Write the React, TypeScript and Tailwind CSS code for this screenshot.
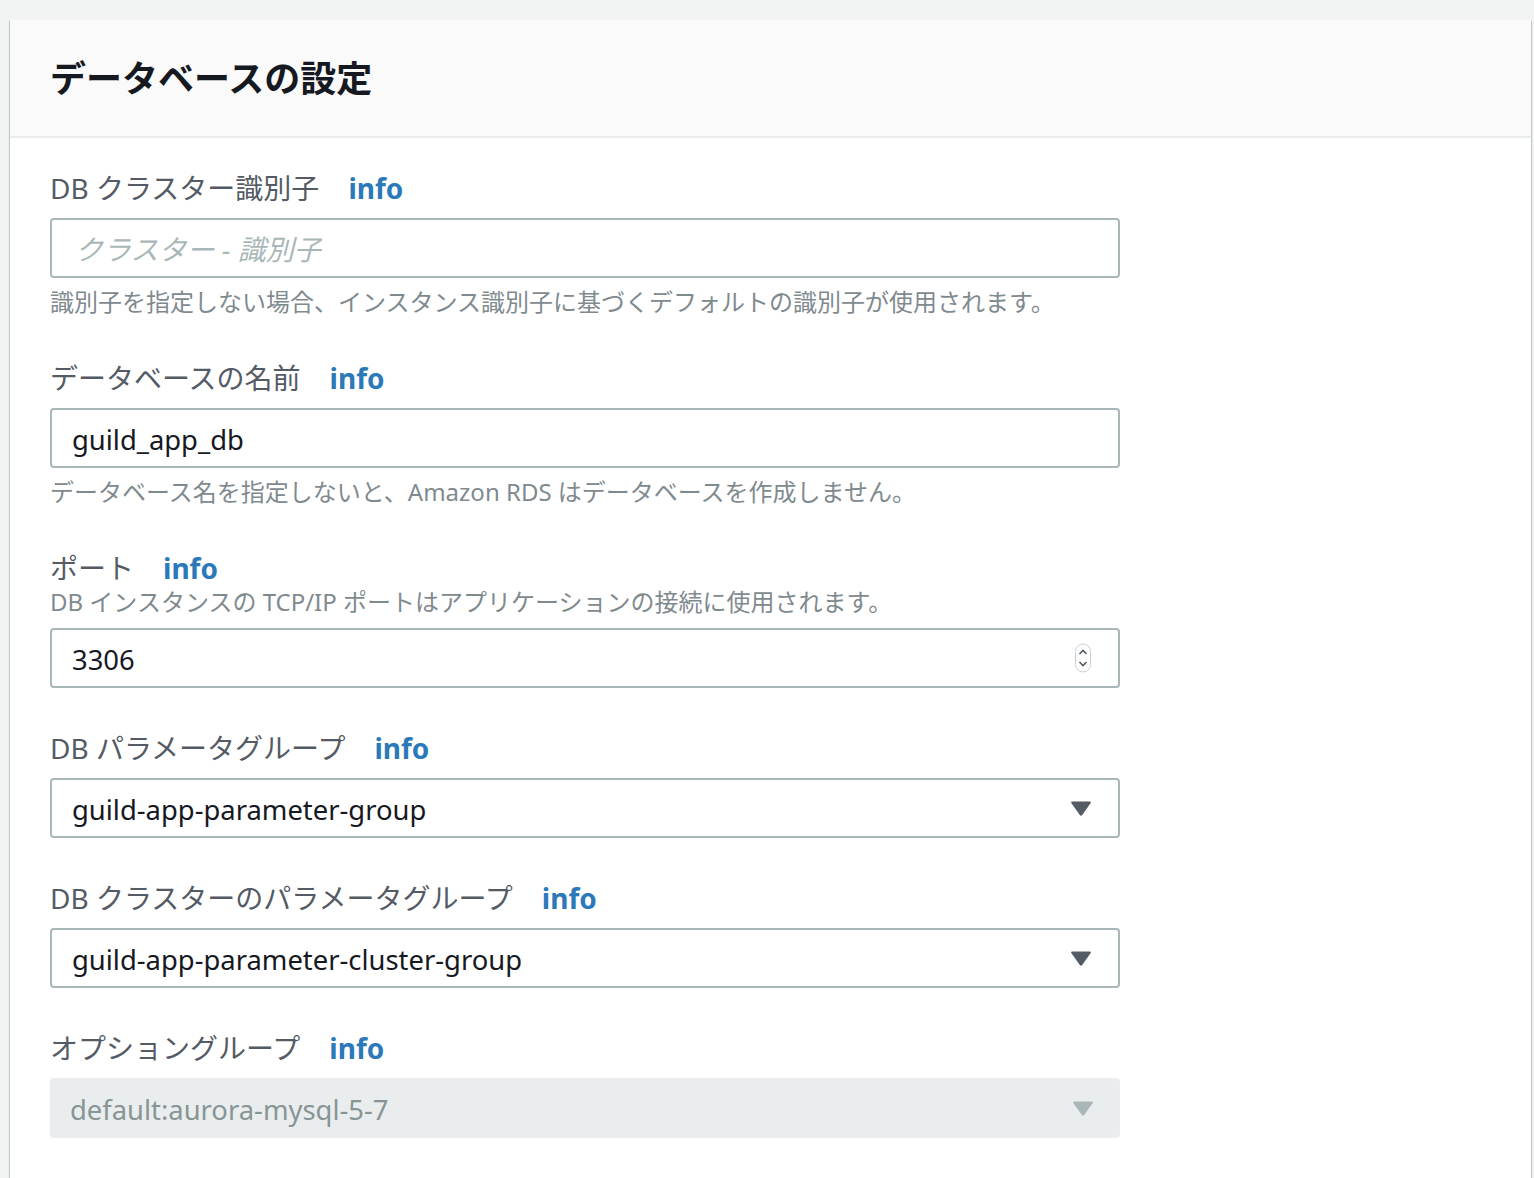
import React from "react";

const font = "font-['Noto_Sans','Noto_Sans_CJK_JP',sans-serif]";

const Label = ({ text, className = "" }: { text: string; className?: string }) => (
  <div className={`flex items-center h-[36px] text-[28px] leading-[36px] text-[#545b64] ${className}`}>
    <span>{text}</span>
    <a className="ml-[29px] font-bold text-[#2b79b9]">info</a>
  </div>
);

const Help = ({ text, className = "" }: { text: string; className?: string }) => (
  <div className={`text-[24px] leading-[32px] text-[#7f8a8f] ${className}`}>{text}</div>
);

const Caret = ({ color }: { color: string }) => (
  <svg width="22" height="17" viewBox="0 0 22 17">
    <path d="M2 1.5 H20 Q21.5 1.5 20.7 3 L12.2 15 Q11 16.5 9.8 15 L1.3 3 Q0.5 1.5 2 1.5 Z" fill={color} />
  </svg>
);

const Spinner = () => (
  <svg width="18" height="30" viewBox="0 0 18 30">
    <rect x="1.5" y="1" width="15" height="28" rx="7.5" fill="#fff" stroke="#c9cfd1" />
    <path d="M5.5 11 L9 7.5 L12.5 11" fill="none" stroke="#545b64" strokeWidth="1.6" />
    <path d="M5.5 19 L9 22.5 L12.5 19" fill="none" stroke="#545b64" strokeWidth="1.6" />
  </svg>
);

const Box = ({
  children,
  right,
  disabled,
}: {
  children: React.ReactNode;
  right?: React.ReactNode;
  disabled?: boolean;
}) => (
  <div
    className={`flex items-center justify-between h-[60px] w-[1070px] rounded-[4px] pl-[20px] pr-[26px] text-[27.4px] ${
      disabled ? "bg-[#eaeded] text-[#879596]" : "border-2 border-[#aab7b8] bg-white text-[#16191f]"
    }`}
  >
    <span className="truncate pt-[3px]">{children}</span>
    {right}
  </div>
);

export default function App() {
  return (
    <div className={`min-h-[1178px] bg-[#f2f3f3] pt-[20px] pl-[10px] ${font}`}>
      <div className="w-[1521px] min-h-[1158px] bg-white shadow-[0_1px_1px_0_rgba(0,28,36,0.3),1px_1px_1px_0_rgba(0,28,36,0.15),-1px_1px_1px_0_rgba(0,28,36,0.15)]">
        <div className="h-[118px] bg-[#fafafa] border-b-2 border-[#eaeded] flex items-center px-[40px] pt-[2px]">
          <h2 className="text-[36px] font-bold text-[#16191f] leading-none">データベースの設定</h2>
        </div>

        <div className="px-[40px] pt-[32px] pb-[40px]">
          <Label text="DB クラスター識別子" />
          <div className="mt-[12px]">
            <Box>
              <span className="italic text-[#aab7b8] pl-[3px] text-[28px]">クラスター - 識別子</span>
            </Box>
          </div>
          <Help className="mt-[8px]" text="識別子を指定しない場合、インスタンス識別子に基づくデフォルトの識別子が使用されます。" />

          <Label className="mt-[42px]" text="データベースの名前" />
          <div className="mt-[12px]">
            <Box>guild_app_db</Box>
          </div>
          <Help className="mt-[8px]" text="データベース名を指定しないと、Amazon RDS はデータベースを作成しません。" />

          <Label className="mt-[42px]" text="ポート" />
          <Help className="leading-[30px]" text="DB インスタンスの TCP/IP ポートはアプリケーションの接続に使用されます。" />
          <div className="mt-[10px]">
            <Box right={<Spinner />}>3306</Box>
          </div>

          <Label className="mt-[42px]" text="DB パラメータグループ" />
          <div className="mt-[12px]">
            <Box right={<Caret color="#545b64" />}>guild-app-parameter-group</Box>
          </div>

          <Label className="mt-[42px]" text="DB クラスターのパラメータグループ" />
          <div className="mt-[12px]">
            <Box right={<Caret color="#545b64" />}>guild-app-parameter-cluster-group</Box>
          </div>

          <Label className="mt-[42px]" text="オプショングループ" />
          <div className="mt-[12px]">
            <Box disabled right={<Caret color="#aab7b8" />}>
              default:aurora-mysql-5-7
            </Box>
          </div>
        </div>
      </div>
    </div>
  );
}
